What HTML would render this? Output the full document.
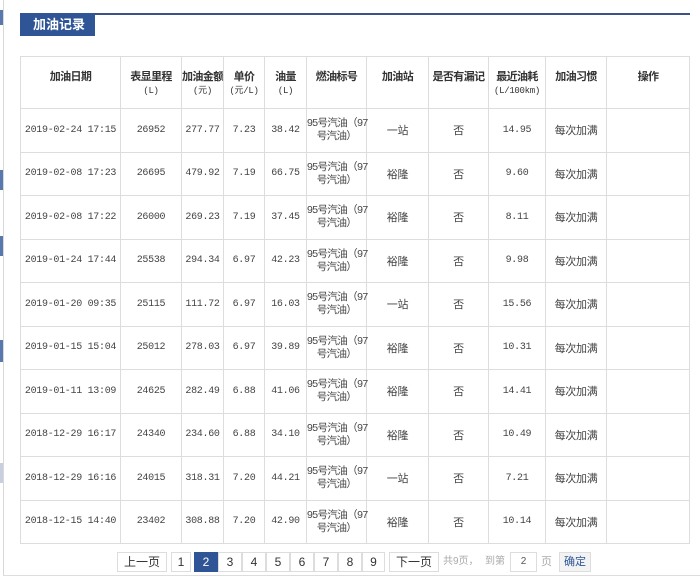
<!DOCTYPE html>
<html><head><meta charset="utf-8"><style>
*{margin:0;padding:0;box-sizing:border-box}
body{width:700px;height:576px;background:#fff;position:relative;overflow:hidden;font-family:"Liberation Sans","Noto Sans CJK SC",sans-serif;color:#333}
.vl{position:absolute;left:3px;top:0;width:1px;height:576px;background:#d8d8d8}
.bm{position:absolute;left:0;width:3px;background:#5a78b0}
.bl{position:absolute;left:3px;top:575px;width:697px;height:1px;background:#ddd}
.topline{position:absolute;left:20px;top:13px;width:670px;height:2px;background:#3d5182}
.tab{position:absolute;left:20px;top:13px;width:75px;height:23px;background:#2f5597;color:#fff;font-size:13px;font-weight:bold;line-height:23px;padding-left:13px}
table{position:absolute;left:20px;top:56px;border-collapse:collapse;font-size:11px;table-layout:fixed;width:669px}
td,th{border:1px solid #ddd;text-align:center;vertical-align:middle;white-space:nowrap;overflow:hidden;padding:0}
tr.h{height:52px}
tr.r{height:43.5px}
th{font-size:11px;font-weight:bold;vertical-align:top;line-height:14px;color:#333;letter-spacing:-0.6px}
th div{margin-top:13px}
th small{display:block;font-weight:normal;font-size:9px;letter-spacing:-0.3px;font-family:"Liberation Mono","Noto Sans CJK SC",monospace}
td{font-family:"Liberation Mono","Noto Sans CJK SC",monospace;font-size:10px;color:#444;letter-spacing:-0.3px}
td.f{line-height:13px;font-size:10.5px;font-family:"Liberation Sans","Noto Sans CJK SC",sans-serif;letter-spacing:-0.6px;overflow:visible}
td.c{font-family:"Liberation Sans","Noto Sans CJK SC",sans-serif;font-size:11px;letter-spacing:-0.3px}
.pg{position:absolute;top:552px;height:20px;border:1px solid #ddd;font-size:12px;line-height:18px;text-align:center;color:#333}
.on{background:#2f5597;color:#fff;border-color:#2f5597}
.t{position:absolute;top:552px;font-size:10px;color:#aaa;line-height:20px}
</style></head><body>
<div class="vl"></div>
<div class="bm" style="top:10px;height:15px"></div>
<div class="bm" style="top:170px;height:20px"></div>
<div class="bm" style="top:236px;height:20px"></div>
<div class="bm" style="top:340px;height:22px"></div>
<div class="bm" style="top:463px;height:20px;background:#c8d0e0"></div>
<div class="bl"></div>
<div class="topline"></div>
<div class="tab">加油记录</div>
<table>
<colgroup><col style="width:100px"><col style="width:61px"><col style="width:42px"><col style="width:41px"><col style="width:42px"><col style="width:60px"><col style="width:62px"><col style="width:60px"><col style="width:57px"><col style="width:61px"><col style="width:83px"></colgroup>
<tr class="h"><th><div>加油日期</div></th><th><div>表显里程<small>(L)</small></div></th><th><div>加油金额<small>(元)</small></div></th><th><div>单价<small>(元/L)</small></div></th><th><div>油量<small>(L)</small></div></th><th><div>燃油标号</div></th><th><div>加油站</div></th><th><div>是否有漏记</div></th><th><div>最近油耗<small>(L/100km)</small></div></th><th><div>加油习惯</div></th><th><div>操作</div></th></tr>
<tr class="r"><td>2019-02-24 17:15</td><td>26952</td><td>277.77</td><td>7.23</td><td>38.42</td><td class="f">95号汽油（97<br>号汽油）</td><td class="c">一站</td><td class="c">否</td><td>14.95</td><td class="c">每次加满</td><td></td></tr>
<tr class="r"><td>2019-02-08 17:23</td><td>26695</td><td>479.92</td><td>7.19</td><td>66.75</td><td class="f">95号汽油（97<br>号汽油）</td><td class="c">裕隆</td><td class="c">否</td><td>9.60</td><td class="c">每次加满</td><td></td></tr>
<tr class="r"><td>2019-02-08 17:22</td><td>26000</td><td>269.23</td><td>7.19</td><td>37.45</td><td class="f">95号汽油（97<br>号汽油）</td><td class="c">裕隆</td><td class="c">否</td><td>8.11</td><td class="c">每次加满</td><td></td></tr>
<tr class="r"><td>2019-01-24 17:44</td><td>25538</td><td>294.34</td><td>6.97</td><td>42.23</td><td class="f">95号汽油（97<br>号汽油）</td><td class="c">裕隆</td><td class="c">否</td><td>9.98</td><td class="c">每次加满</td><td></td></tr>
<tr class="r"><td>2019-01-20 09:35</td><td>25115</td><td>111.72</td><td>6.97</td><td>16.03</td><td class="f">95号汽油（97<br>号汽油）</td><td class="c">一站</td><td class="c">否</td><td>15.56</td><td class="c">每次加满</td><td></td></tr>
<tr class="r"><td>2019-01-15 15:04</td><td>25012</td><td>278.03</td><td>6.97</td><td>39.89</td><td class="f">95号汽油（97<br>号汽油）</td><td class="c">裕隆</td><td class="c">否</td><td>10.31</td><td class="c">每次加满</td><td></td></tr>
<tr class="r"><td>2019-01-11 13:09</td><td>24625</td><td>282.49</td><td>6.88</td><td>41.06</td><td class="f">95号汽油（97<br>号汽油）</td><td class="c">裕隆</td><td class="c">否</td><td>14.41</td><td class="c">每次加满</td><td></td></tr>
<tr class="r"><td>2018-12-29 16:17</td><td>24340</td><td>234.60</td><td>6.88</td><td>34.10</td><td class="f">95号汽油（97<br>号汽油）</td><td class="c">裕隆</td><td class="c">否</td><td>10.49</td><td class="c">每次加满</td><td></td></tr>
<tr class="r"><td>2018-12-29 16:16</td><td>24015</td><td>318.31</td><td>7.20</td><td>44.21</td><td class="f">95号汽油（97<br>号汽油）</td><td class="c">一站</td><td class="c">否</td><td>7.21</td><td class="c">每次加满</td><td></td></tr>
<tr class="r"><td>2018-12-15 14:40</td><td>23402</td><td>308.88</td><td>7.20</td><td>42.90</td><td class="f">95号汽油（97<br>号汽油）</td><td class="c">裕隆</td><td class="c">否</td><td>10.14</td><td class="c">每次加满</td><td></td></tr>
</table>
<div class="pg" style="left:117px;width:50px">上一页</div>
<div class="pg" style="left:171px;width:20px">1</div>
<div class="pg on" style="left:194px;width:24px">2</div>
<div class="pg" style="left:218px;width:24px">3</div>
<div class="pg" style="left:242px;width:24px">4</div>
<div class="pg" style="left:266px;width:24px">5</div>
<div class="pg" style="left:290px;width:24px">6</div>
<div class="pg" style="left:314px;width:24px">7</div>
<div class="pg" style="left:338px;width:24px">8</div>
<div class="pg" style="left:362px;width:23px">9</div>
<div class="pg" style="left:389px;width:50px">下一页</div>
<div class="t" style="left:443px">共9页，</div>
<div class="t" style="left:485px">到第</div>
<div class="pg" style="left:510px;width:27px;font-size:10px;color:#555">2</div>
<div class="t" style="left:541px;font-size:11px">页</div>
<div class="pg" style="left:559px;width:32px;font-size:11px;color:#2f5597;background:#f3f3f3">确定</div>
</body></html>
